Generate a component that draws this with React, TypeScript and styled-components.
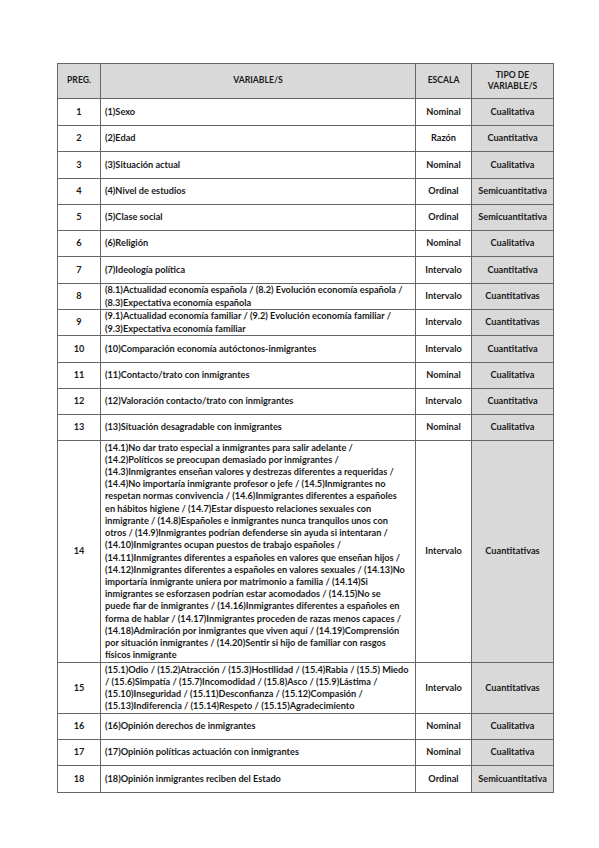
import { FC } from 'react';
import styled, { createGlobalStyle } from 'styled-components';

const GlobalStyle = createGlobalStyle`
  html, body {
    margin: 0;
    padding: 0;
    background: #ffffff;
  }
  body {
    font-family: Lato, "Liberation Sans", sans-serif;
    color: #1a1a1a;
  }
`;

const Page = styled.div`
  width: 599px;
  min-height: 848px;
  padding: 63px 0 0 57px;
  box-sizing: border-box;
`;

const Table = styled.table`
  border-collapse: collapse;
  table-layout: fixed;
  width: 496px;
  border: 1.5px solid #555;
`;

const HeadCell = styled.th`
  background: #d9d9d9;
  border: 1px solid #666;
  height: 34px;
  padding: 0 3px;
  font-size: 8.6px;
  font-weight: 700;
  line-height: 11.5px;
  text-align: center;
  vertical-align: middle;
`;

const Row = styled.tr<{ $h: number }>`
  height: ${(p) => p.$h}px;
`;

const Cell = styled.td<{ $align?: 'left' | 'center'; $shaded?: boolean }>`
  border: 1px solid #666;
  padding: 0 4px;
  font-size: 9.2px;
  font-weight: 700;
  line-height: 12.2px;
  text-align: ${(p) => p.$align ?? 'center'};
  vertical-align: middle;
  background: ${(p) => (p.$shaded ? '#d9d9d9' : '#ffffff')};
  white-space: nowrap;
  overflow: hidden;
`;

const Line = styled.span`
  display: block;
`;

interface Item {
  n: number;
  lines: string[];
  escala: string;
  tipo: string;
  h: number;
}

const items: Item[] = [
  { n: 1, lines: ['(1)Sexo'], escala: 'Nominal', tipo: 'Cualitativa', h: 27 },
  { n: 2, lines: ['(2)Edad'], escala: 'Razón', tipo: 'Cuantitativa', h: 26 },
  { n: 3, lines: ['(3)Situación actual'], escala: 'Nominal', tipo: 'Cualitativa', h: 27 },
  { n: 4, lines: ['(4)Nivel de estudios'], escala: 'Ordinal', tipo: 'Semicuantitativa', h: 26 },
  { n: 5, lines: ['(5)Clase social'], escala: 'Ordinal', tipo: 'Semicuantitativa', h: 26 },
  { n: 6, lines: ['(6)Religión'], escala: 'Nominal', tipo: 'Cualitativa', h: 26 },
  { n: 7, lines: ['(7)Ideología política'], escala: 'Intervalo', tipo: 'Cuantitativa', h: 27 },
  {
    n: 8,
    lines: [
      '(8.1)Actualidad economía española / (8.2) Evolución economía española /',
      '(8.3)Expectativa economía española',
    ],
    escala: 'Intervalo',
    tipo: 'Cuantitativas',
    h: 26,
  },
  {
    n: 9,
    lines: [
      '(9.1)Actualidad economía familiar / (9.2) Evolución economía familiar /',
      '(9.3)Expectativa economía familiar',
    ],
    escala: 'Intervalo',
    tipo: 'Cuantitativas',
    h: 26,
  },
  { n: 10, lines: ['(10)Comparación economía autóctonos-inmigrantes'], escala: 'Intervalo', tipo: 'Cuantitativa', h: 27 },
  { n: 11, lines: ['(11)Contacto/trato con inmigrantes'], escala: 'Nominal', tipo: 'Cualitativa', h: 26 },
  { n: 12, lines: ['(12)Valoración contacto/trato con inmigrantes'], escala: 'Intervalo', tipo: 'Cuantitativa', h: 26 },
  { n: 13, lines: ['(13)Situación desagradable con inmigrantes'], escala: 'Nominal', tipo: 'Cualitativa', h: 26 },
  {
    n: 14,
    lines: [
      '(14.1)No dar trato especial a inmigrantes para salir adelante /',
      '(14.2)Políticos se preocupan demasiado por inmigrantes /',
      '(14.3)Inmigrantes enseñan valores y destrezas diferentes a requeridas /',
      '(14.4)No importaría inmigrante profesor o jefe / (14.5)Inmigrantes no',
      'respetan normas convivencia / (14.6)Inmigrantes diferentes a españoles',
      'en hábitos higiene / (14.7)Estar dispuesto relaciones sexuales con',
      'inmigrante / (14.8)Españoles e inmigrantes nunca tranquilos unos con',
      'otros / (14.9)Inmigrantes podrían defenderse sin ayuda si intentaran /',
      '(14.10)Inmigrantes ocupan puestos de trabajo españoles /',
      '(14.11)Inmigrantes diferentes a españoles en valores que enseñan hijos /',
      '(14.12)Inmigrantes diferentes a españoles en valores sexuales / (14.13)No',
      'importaría inmigrante uniera por matrimonio a familia / (14.14)Si',
      'inmigrantes se esforzasen podrían estar acomodados / (14.15)No se',
      'puede fiar de inmigrantes / (14.16)Inmigrantes diferentes a españoles en',
      'forma de hablar / (14.17)Inmigrantes proceden de razas menos capaces /',
      '(14.18)Admiración por inmigrantes que viven aquí / (14.19)Comprensión',
      'por situación inmigrantes / (14.20)Sentir si hijo de familiar con rasgos',
      'físicos inmigrante',
    ],
    escala: 'Intervalo',
    tipo: 'Cuantitativas',
    h: 222,
  },
  {
    n: 15,
    lines: [
      '(15.1)Odio / (15.2)Atracción / (15.3)Hostilidad / (15.4)Rabia / (15.5) Miedo',
      '/ (15.6)Simpatía / (15.7)Incomodidad / (15.8)Asco / (15.9)Lástima /',
      '(15.10)Inseguridad / (15.11)Desconfianza / (15.12)Compasión /',
      '(15.13)Indiferencia / (15.14)Respeto / (15.15)Agradecimiento',
    ],
    escala: 'Intervalo',
    tipo: 'Cuantitativas',
    h: 51,
  },
  { n: 16, lines: ['(16)Opinión derechos de inmigrantes'], escala: 'Nominal', tipo: 'Cualitativa', h: 26 },
  { n: 17, lines: ['(17)Opinión políticas actuación con inmigrantes'], escala: 'Nominal', tipo: 'Cualitativa', h: 26 },
  { n: 18, lines: ['(18)Opinión inmigrantes reciben del Estado'], escala: 'Ordinal', tipo: 'Semicuantitativa', h: 27 },
];

const VariablesTable: FC = () => (
  <Table>
    <colgroup>
      <col style={{ width: 43 }} />
      <col style={{ width: 315 }} />
      <col style={{ width: 56 }} />
      <col style={{ width: 82 }} />
    </colgroup>
    <thead>
      <tr>
        <HeadCell>PREG.</HeadCell>
        <HeadCell>VARIABLE/S</HeadCell>
        <HeadCell>ESCALA</HeadCell>
        <HeadCell>
          TIPO DE
          <br />
          VARIABLE/S
        </HeadCell>
      </tr>
    </thead>
    <tbody>
      {items.map((item) => (
        <Row key={item.n} $h={item.h}>
          <Cell>{item.n}</Cell>
          <Cell $align="left">
            {item.lines.map((l, i) => (
              <Line key={i}>{l}</Line>
            ))}
          </Cell>
          <Cell>{item.escala}</Cell>
          <Cell $shaded>{item.tipo}</Cell>
        </Row>
      ))}
    </tbody>
  </Table>
);

const App: FC = () => (
  <>
    <GlobalStyle />
    <Page>
      <VariablesTable />
    </Page>
  </>
);

export default App;
